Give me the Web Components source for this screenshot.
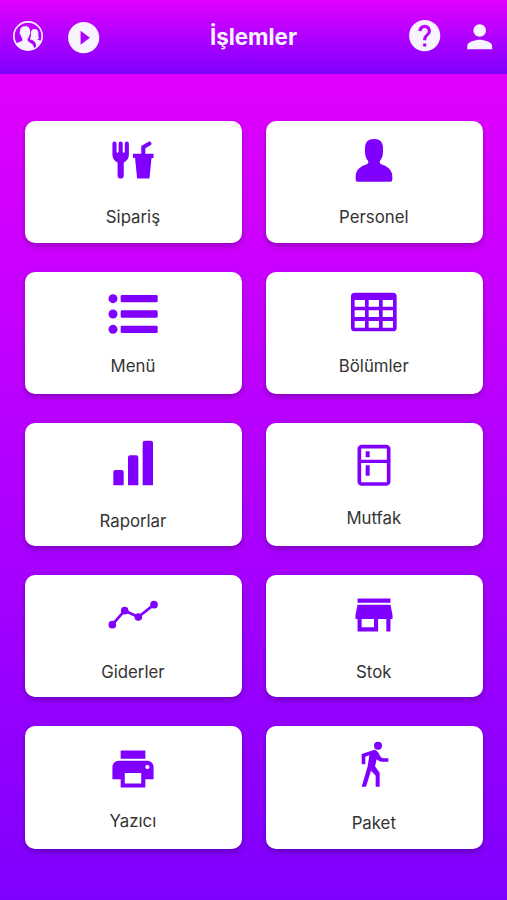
<!DOCTYPE html>
<html lang="tr">
<head>
<meta charset="utf-8">
<title>İşlemler</title>
<style>
    html, body {
        margin: 0;
        height: 100%;
    }
    body {
        font-family: Inter, "Liberation Sans", sans-serif;
        overflow: hidden;
    }
</style>
</head>
<body>
<v-app>
    <v-header slot="header">
        <v-icon slot="left" name="group" style="--size: 32px; margin-top: 19.6px"></v-icon>
        <v-icon slot="left" name="play" style="--size: 37.4px; margin-top: 18.5px"></v-icon>
        İşlemler
        <v-icon slot="right" name="help" style="--size: 37.4px; margin-top: 16.8px"></v-icon>
        <v-icon slot="right" name="person" style="--size: 37.4px; margin-top: 18.4px"></v-icon>
    </v-header>
    <v-tile icon="order" style="--top: 14.5px; --gap: 21.6px">Sipariş</v-tile>
    <v-tile icon="contact" style="--top: 14.7px; --gap: 21.4px">Personel</v-tile>
    <v-tile icon="list" style="--top: 17px; --gap: 17px">Menü</v-tile>
    <v-tile icon="table" style="--top: 15.3px; --gap: 18.7px">Bölümler</v-tile>
    <v-tile icon="bars" style="--top: 15.7px; --gap: 21.5px">Raporlar</v-tile>
    <v-tile icon="fridge" style="--top: 15.7px; --gap: 19px">Mutfak</v-tile>
    <v-tile icon="timeline" style="--top: 15.3px; --gap: 22.2px">Giderler</v-tile>
    <v-tile icon="store" style="--top: 14.8px; --gap: 22.2px">Stok</v-tile>
    <v-tile icon="printer" style="--top: 17.5px; --gap: 17px">Yazıcı</v-tile>
    <v-tile icon="walk" style="--top: 14px; --gap: 22.5px">Paket</v-tile>
</v-app>

<script>
const icons = {
    group: {
        box: '36 59 96 96',
        body: `<circle cx="84" cy="107" r="42.5" fill="none" stroke="currentColor" stroke-width="5"/>
            <path d="M75 78C64 78 60 85 60 94C58 95 59 103 62 104C63 110 66 113 67 115V121C61 125 51 126 47 131C55 143 69 150 84 150C91 150 97 148 101 147C103 141 101 135 96 131C92 127 87 125 83 121V115C86 112 88 108 88 104C91 103 92 95 90 94C91 84 86 78 75 78Z"/>
            <path d="M103 86C95 86 92 92 93 101C93 108 91 112 90 117C93 119 96 119 98 120C105 124 110 131 108 141C116 137 121 131 124 122C120 120 114 120 111 117C114 117 116 116 117 113C115 109 115 105 115 99C115 91 111 86 103 86Z"/>`
    },
    play: {
        box: '0 0 24 24',
        body: '<path d="M12 2C6.500 2 2 6.500 2 12s4.500 10 10 10 10-4.500 10-10S17.500 2 12 2zm-2 14.500v-9l6 4.500-6 4.500z"/>'
    },
    help: {
        box: '0 0 24 24',
        body: '<path d="M12 2C6.480 2 2 6.480 2 12s4.480 10 10 10 10-4.480 10-10S17.520 2 12 2zm1 17h-2v-2h2v2zm2.070-7.750l-.9.920C13.450 12.900 13 13.500 13 15h-2v-.5c0-1.100.45-2.100 1.170-2.830l1.240-1.260c.37-.36.59-.86.59-1.410 0-1.100-.9-2-2-2s-2 .9-2 2H8c0-2.210 1.790-4 4-4s4 1.790 4 4c0 .88-.36 1.680-.93 2.250z"/>'
    },
    person: {
        box: '0 0 24 24',
        body: '<path d="M12 12c2.210 0 4-1.790 4-4s-1.790-4-4-4-4 1.790-4 4 1.790 4 4 4zm0 2c-2.670 0-8 1.340-8 4v2h16v-2c0-2.660-5.330-4-8-4z"/>'
    },
    order: {
        box: '-.15 -.15 24.3 24.3',
        body: '<path d="M3 3A1 1 0 0 0 2 4V9.500C2 11.190 3.030 12.630 4.500 13.220V19.500A1.500 1.500 0 0 0 6 21A1.500 1.500 0 0 0 7.500 19.500V13.220C8.970 12.630 10 11.190 10 9.500V4A1 1 0 0 0 9 3A1 1 0 0 0 8 4V8A.5 .5 0 0 1 7.500 8.500A.5 .5 0 0 1 7 8V4A1 1 0 0 0 6 3A1 1 0 0 0 5 4V8A.5 .5 0 0 1 4.500 8.500A.5 .5 0 0 1 4 8V4A1 1 0 0 0 3 3M19.880 3C19.750 3 19.620 3.090 19.500 3.160L16 5.250V9H12V11H13L14 21H20L21 11H22V9H18V6.340L20.500 4.840C21 4.560 21.130 4 20.840 3.500C20.630 3.140 20.260 2.950 19.880 3Z"/>'
    },
    contact: {
        box: '0 0 150 150',
        body: '<path d="M75 12C57 12 48 22 48 39V50C48 64 52 71 57 77C59 82 58 86 53 88C38 93 20 103 20 124V134Q20 140 26 140H124Q130 140 130 134V124C130 103 112 93 97 88C92 86 91 82 93 77C98 71 102 64 102 50V39C102 22 93 12 75 12Z"/>'
    },
    list: {
        box: '0 0 150 150',
        body: `<circle cx="15" cy="29" r="13.500"/><circle cx="15" cy="75" r="13.500"/><circle cx="15" cy="121" r="13.500"/>
            <rect x="38" y="18" width="111" height="22" rx="4"/><rect x="38" y="64" width="111" height="22" rx="4"/><rect x="38" y="110" width="111" height="22" rx="4"/>`
    },
    table: {
        box: '0 0 150 150',
        body: '<path fill-rule="evenodd" d="M17 17H132Q143 17 143 28V122Q143 133 132 133H17Q6 133 6 122V28Q6 17 17 17ZM17 39v20h31v-20zM59 39v20h31v-20zM101 39v20h31v-20zM17 70v20h31v-20zM59 70v20h31v-20zM101 70v20h31v-20zM17 102v20h31v-20zM59 102v20h31v-20zM101 102v20h31v-20z"/>'
    },
    bars: {
        box: '0 0 150 150',
        body: '<path d="M16 139V99Q16 93 22 93H41Q47 93 47 99V139ZM60 139V55Q60 49 66 49H85Q91 49 91 55V139ZM104 139V11Q104 5 110 5H129Q135 5 135 11V139Z"/>'
    },
    fridge: {
        box: '0 0 150 150',
        body: `<rect x="31" y="23" width="88" height="112" rx="7" fill="none" stroke="currentColor" stroke-width="11"/>
            <path d="M31 62h88v10h-88zM50 37h12v18h-12zM50 79h12v31h-12z"/>`
    },
    timeline: {
        box: '0 0 150 150',
        body: `<path d="M13 104L50 62L91 81L138 44" fill="none" stroke="currentColor" stroke-width="8"/>
            <circle cx="13" cy="104" r="11.500"/><circle cx="50" cy="62" r="11.500"/><circle cx="91" cy="81" r="11.500"/><circle cx="138" cy="44" r="11.500"/>`
    },
    store: {
        box: '-.15 -.15 24.3 24.3',
        body: '<path d="M20 4H4v2h16V4zm1 10v-2l-1-5H4l-1 5v2h1v6h10v-6h4v6h2v-6h1zm-9 4H6v-4h6v4z"/>'
    },
    printer: {
        box: '-.15 -.15 24.3 24.3',
        body: '<path d="M19 8H5c-1.660 0-3 1.340-3 3v6h4v4h12v-4h4v-6c0-1.660-1.340-3-3-3zm-3 11H8v-5h8v5zm3-7c-.55 0-1-.45-1-1s.45-1 1-1 1 .45 1 1-.45 1-1 1zm-1-9H6v4h12V3z"/>'
    },
    walk: {
        box: '0 0 150 150',
        body: `<circle cx="87" cy="17" r="12"/>
            <path d="M77 29L38 42V73H49V50L61 46L56 79L38 140H51L66 92L80 107V140H92V98L78 79L83 58Q90 65 97 65H118V55H101Q96 54 92 46Q87 32 77 29Z"/>`
    }
};

customElements.define('v-icon', class extends HTMLElement {
    constructor() {
        super();
        this.attachShadow({mode: 'open'});
    }

    connectedCallback() {
        const icon = icons[this.getAttribute('name')];
        this.shadowRoot.innerHTML = `<style>
            :host { display: block; flex: none; width: var(--size, 50px); height: var(--size, 50px); }
            svg { display: block; width: 100%; height: 100%; fill: currentColor; }
        </style>
        <svg viewBox="${icon.box}" aria-hidden="true">${icon.body}</svg>`;
    }
});

customElements.define('v-header', class extends HTMLElement {
    constructor() {
        super();
        this.attachShadow({mode: 'open'}).innerHTML = `<style>
            :host {
                display: grid;
                grid-template-columns: 1fr auto 1fr;
                box-sizing: border-box;
                height: 73.6px;
                color: #f8f4ff;
                background: linear-gradient(#e100ff, #7f00ff);
            }
            div { display: flex; align-items: flex-start; }
            .left { gap: 20.6px; padding-left: 12px; }
            .right { gap: 17.4px; padding-right: 8.6px; justify-content: flex-end; }
            h1 { margin: 23.4px 0 0; font-size: 22.4px; line-height: 28px; font-weight: 700; }
        </style>
        <div class="left"><slot name="left"></slot></div>
        <h1><slot></slot></h1>
        <div class="right"><slot name="right"></slot></div>`;
    }
});

customElements.define('v-tile', class extends HTMLElement {
    constructor() {
        super();
        this.attachShadow({mode: 'open'});
    }

    connectedCallback() {
        this.shadowRoot.innerHTML = `<style>
            :host {
                display: flex;
                flex-direction: column;
                align-items: center;
                box-sizing: border-box;
                padding-top: var(--top);
                border-radius: 10px;
                background: #fff;
                box-shadow: 0 3px 6px rgba(0, 0, 0, .27);
                cursor: pointer;
            }
            v-icon { color: #7f00ff; }
            span { margin: var(--gap) 1px 0 0; font-size: 16.8px; line-height: 20px; color: #333; }
        </style>
        <v-icon name="${this.getAttribute('icon')}"></v-icon>
        <span><slot></slot></span>`;
    }
});

customElements.define('v-app', class extends HTMLElement {
    constructor() {
        super();
        this.attachShadow({mode: 'open'}).innerHTML = `<style>
            :host { display: flex; flex-direction: column; height: 100%; }
            main {
                flex: 1;
                display: grid;
                grid-template-columns: 1fr 1fr;
                grid-auto-rows: 122.4px;
                gap: 29px 24px;
                padding: 47px 24.3px 0 25px;
                background: linear-gradient(#e100ff, #7f00ff);
            }
        </style>
        <slot name="header"></slot>
        <main><slot></slot></main>`;
    }
});
</script>
</body>
</html>
